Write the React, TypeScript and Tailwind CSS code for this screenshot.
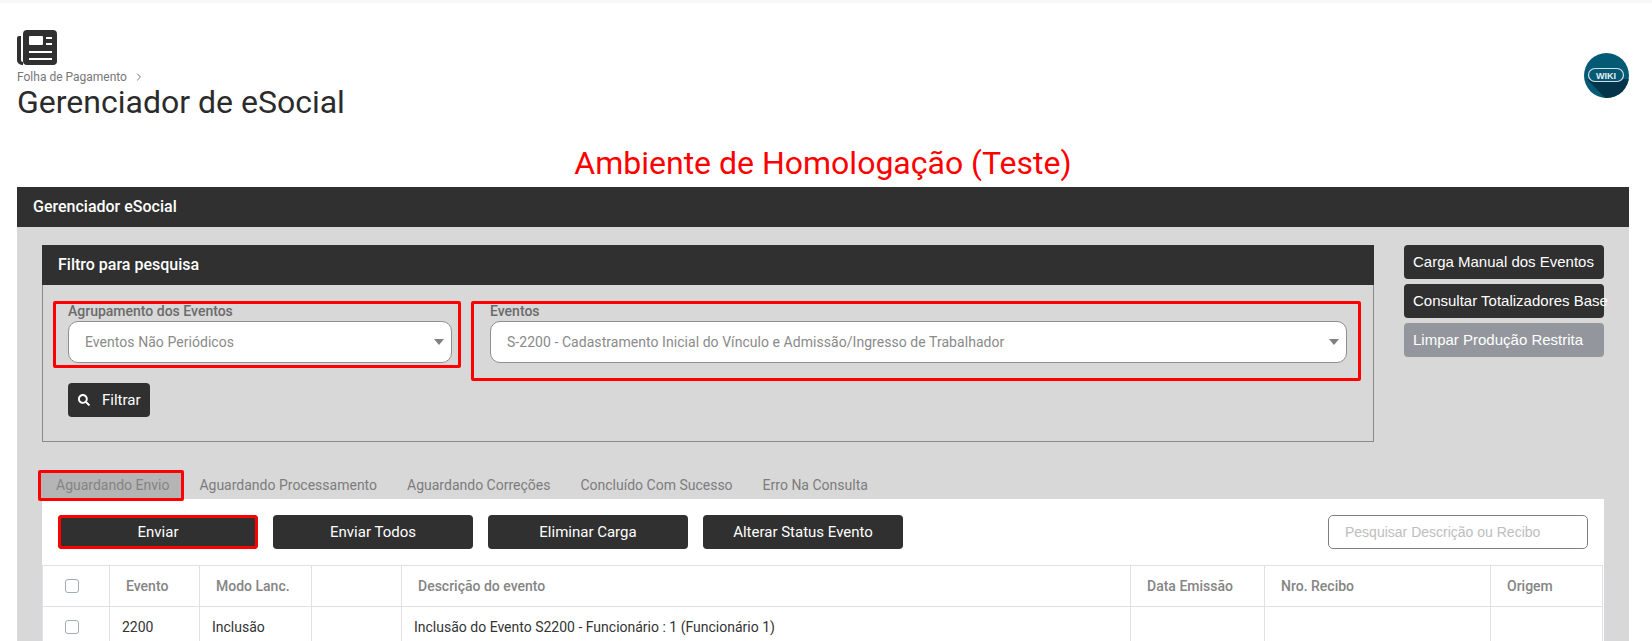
import { FaSearch } from 'react-icons/fa'
import { ChevronRight } from 'lucide-react'

const sideButtons = [
  { label: 'Carga Manual dos Eventos', bg: 'bg-[#303030]' },
  { label: 'Consultar Totalizadores Base', bg: 'bg-[#303030]' },
  { label: 'Limpar Produção Restrita', bg: 'bg-[#93979d]' },
]

const tabs = ['Aguardando Processamento', 'Aguardando Correções', 'Concluído Com Sucesso', 'Erro Na Consulta']

function NewsIcon() {
  return (
    <svg width="40" height="35" viewBox="0 0 40 35" className="block">
      <rect x="6" y="0" width="34" height="35" rx="4" fill="#303030" />
      <path d="M0 8 a2 2 0 0 1 2-2 h2 v24 a2 2 0 0 0 2 2 v3 h-1 a5 5 0 0 1 -5-5 z" fill="#303030" />
      <rect x="12" y="6" width="14" height="9" rx="1" fill="#fff" />
      <rect x="29" y="7" width="6" height="2" fill="#fff" />
      <rect x="29" y="13" width="6" height="2" fill="#fff" />
      <rect x="12" y="21" width="23" height="2" fill="#fff" />
      <rect x="12" y="28" width="23" height="2" fill="#fff" />
    </svg>
  )
}

function WikiBadge() {
  return (
    <svg width="45" height="45" viewBox="0 0 45 45" className="mt-[50px]">
      <defs>
        <clipPath id="wiki-clip">
          <circle cx="22.5" cy="22.5" r="22.5" />
        </clipPath>
      </defs>
      <circle cx="22.5" cy="22.5" r="22.5" fill="#045a75" />
      <path d="M3 26 H50 V50 H26 Z" fill="#03344a" clipPath="url(#wiki-clip)" />
      <rect x="4.5" y="15.5" width="35" height="13" rx="6.5" fill="#045a75" stroke="#d5dde2" strokeWidth="1.2" />
      <text x="22" y="25.5" textAnchor="middle" fontSize="9" fontWeight="700" fill="#e8eef1" fontFamily="'Liberation Sans', sans-serif">WIKI</text>
    </svg>
  )
}

function SelectBox({ value }: { value: string }) {
  return (
    <div className="h-[42px] bg-white border border-[#8f8f8f] rounded-[10px] flex items-center justify-between pl-[16px] pr-[7px]">
      <span className="text-[14px] text-[#8a8a8a] tracking-[0.05px]">{value}</span>
      <span className="w-0 h-0 border-x-[5.5px] border-x-transparent border-t-[6px] border-t-[#808080]" />
    </div>
  )
}

function ActionButton({ label, marked }: { label: string; marked?: boolean }) {
  return (
    <button className={`w-[200px] h-[34px] bg-[#303030] rounded-[4px] text-white text-[15px] ${marked ? 'outline-[3px] outline-solid -outline-offset-[3px] outline-[#ff0000]' : ''}`}>
      {label}
    </button>
  )
}

export default function App() {
  return (
    <div className="h-[641px] overflow-hidden bg-white font-['Roboto',sans-serif]">
      <div className="h-[3px] bg-[#f8f8f8]" />

      <div className="ml-[17px] mr-[23px] flex justify-between items-start">
        <div className="pt-[27px]">
          <NewsIcon />
          <div className="flex items-center gap-[6px] mt-[4px] h-[16px] text-[12px] text-[#777]">
            Folha de Pagamento
            <ChevronRight className="w-[12px] h-[12px]" strokeWidth={2} />
          </div>
          <h1 className="-mt-[2px] text-[32px] leading-[38px] text-[#2b2b2b] font-normal">Gerenciador de eSocial</h1>
        </div>
        <WikiBadge />
      </div>

      <div className="mt-[22px] h-[40px] text-center text-[32px] leading-[40px] text-[#ff0000] pr-[6px]">
        Ambiente de Homologação (Teste)
      </div>

      <div className="mt-[4px] ml-[17px] mr-[23px]">
        <div className="h-[40px] bg-[#303030] flex items-center pl-[16px] text-[16px] font-medium text-white">
          Gerenciador eSocial
        </div>

        <div className="h-[500px] bg-[#d8d8d8] pt-[18px] pl-[25px] pr-[25px]">
          <div className="flex items-start">
            <div className="w-[1332px]">
              <div className="h-[40px] bg-[#303030] flex items-center pl-[16px] text-[16px] font-medium text-white">
                Filtro para pesquisa
              </div>
              <div className="h-[157px] border border-t-0 border-[#8a8a8a] pt-[16px] pl-[10px]">
                <div className="flex items-start gap-[10px]">
                  <div className="w-[408px] h-[67px] border-[3px] border-[#ff0000] rounded-[2px] pl-[12px] pr-[6px]">
                    <div className="h-[17px] text-[14px] leading-[15px] font-medium text-[#6b6b6b]">Agrupamento dos Eventos</div>
                    <SelectBox value="Eventos Não Periódicos" />
                  </div>
                  <div className="w-[890px] h-[80px] border-[3px] border-[#ff0000] rounded-[2px] pl-[16px] pr-[11px]">
                    <div className="h-[17px] text-[14px] leading-[15px] font-medium text-[#6b6b6b]">Eventos</div>
                    <SelectBox value="S-2200 - Cadastramento Inicial do Vínculo e Admissão/Ingresso de Trabalhador" />
                  </div>
                </div>
                <button className="mt-[2px] ml-[15px] flex items-center gap-[12px] w-[82px] h-[34px] rounded-[4px] bg-[#303030] pl-[10px] text-[15px] text-white">
                  <FaSearch className="w-[12px] h-[12px]" />
                  Filtrar
                </button>
              </div>
            </div>
            <div className="ml-[30px] w-[200px] flex flex-col gap-[5px]">
              {sideButtons.map(b => (
                <div key={b.label} className={`h-[34px] ${b.bg} rounded-[4px] pl-[9px] flex items-center whitespace-nowrap text-white text-[15px] font-['Liberation_Sans',sans-serif]`}>
                  {b.label}
                </div>
              ))}
            </div>
          </div>

          <div className="mt-[28px] flex items-center h-[31px] text-[14px] text-[#7c7c7c] -ml-[4px]">
            <div className="h-[31px] border-[3px] border-[#ff0000] rounded-[2px] bg-[#b5b5b5] pl-[15px] pr-[12px] flex items-center text-[#848484]">
              Aguardando Envio
            </div>
            {tabs.map(t => (
              <div key={t} className="px-[15px]">{t}</div>
            ))}
          </div>

          <div className="w-[1562px] -mt-[2px] bg-white h-[200px]">
            <div className="flex items-center gap-[15px] pt-[16px] pl-[16px] pr-[16px]">
              <ActionButton label="Enviar" marked />
              <ActionButton label="Enviar Todos" />
              <ActionButton label="Eliminar Carga" />
              <ActionButton label="Alterar Status Evento" />
              <div className="ml-auto w-[260px] h-[34px] border border-[#808080] rounded-[5px] flex items-center pl-[16px] text-[14px] text-[#bdbdbd] font-['Liberation_Sans',sans-serif]">
                Pesquisar Descrição ou Recibo
              </div>
            </div>

            <table className="mt-[16px] w-[1560px] table-fixed border-collapse text-[14px] text-[#333]">
              <colgroup>
                <col className="w-[67px]" />
                <col className="w-[90px]" />
                <col className="w-[112px]" />
                <col className="w-[90px]" />
                <col className="w-[729px]" />
                <col className="w-[134px]" />
                <col className="w-[226px]" />
                <col className="w-[112px]" />
              </colgroup>
              <thead>
                <tr className="h-[41px] text-[#858585]">
                  <th className="border border-[#dee2e6] pl-[22px] text-left font-medium">
                    <span className="block w-[14px] h-[14px] rounded-[3px] border border-[#a3abb3]" />
                  </th>
                  <th className="border border-[#dee2e6] pl-[16px] text-left font-medium">Evento</th>
                  <th className="border border-[#dee2e6] pl-[16px] text-left font-medium">Modo Lanc.</th>
                  <th className="border border-[#dee2e6]" />
                  <th className="border border-[#dee2e6] pl-[16px] text-left font-medium">Descrição do evento</th>
                  <th className="border border-[#dee2e6] pl-[16px] text-left font-medium">Data Emissão</th>
                  <th className="border border-[#dee2e6] pl-[16px] text-left font-medium">Nro. Recibo</th>
                  <th className="border border-[#dee2e6] pl-[16px] text-left font-medium">Origem</th>
                </tr>
              </thead>
              <tbody>
                <tr className="h-[41px]">
                  <td className="border border-[#dee2e6] pl-[22px]">
                    <span className="block w-[14px] h-[14px] rounded-[3px] border border-[#a3abb3]" />
                  </td>
                  <td className="border border-[#dee2e6] pl-[12px]">2200</td>
                  <td className="border border-[#dee2e6] pl-[12px]">Inclusão</td>
                  <td className="border border-[#dee2e6]" />
                  <td className="border border-[#dee2e6] pl-[12px]">Inclusão do Evento S2200 - Funcionário : 1 (Funcionário 1)</td>
                  <td className="border border-[#dee2e6]" />
                  <td className="border border-[#dee2e6]" />
                  <td className="border border-[#dee2e6]" />
                </tr>
              </tbody>
            </table>
          </div>
        </div>
      </div>
    </div>
  )
}
